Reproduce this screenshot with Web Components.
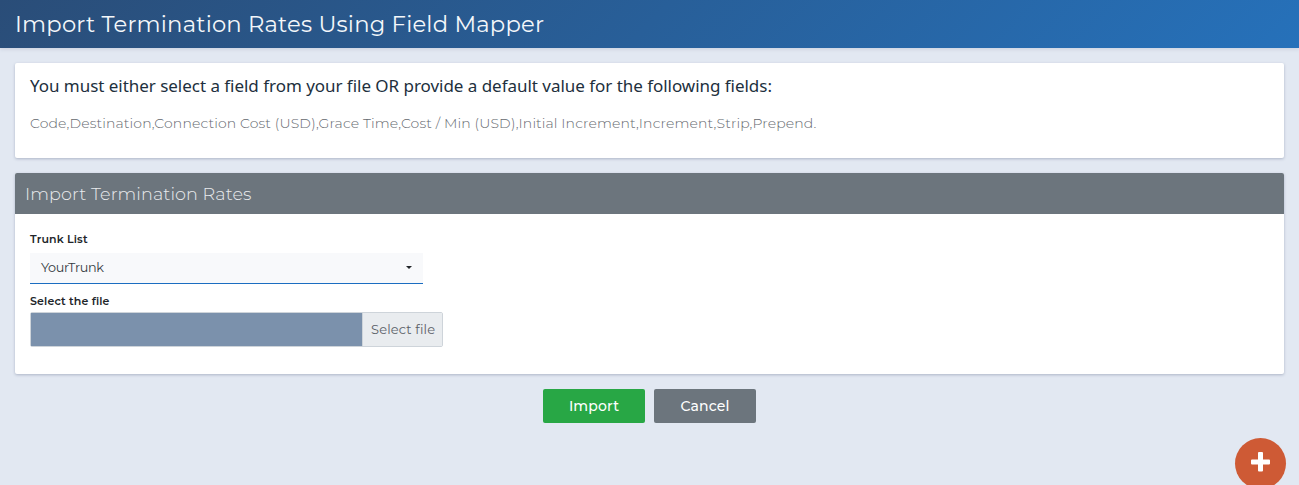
<!DOCTYPE html>
<html lang="en"><head><meta charset="utf-8"><title>Import Termination Rates</title>
<style>
html,body{margin:0;height:100%;overflow:hidden}
body{background:#e2e8f2;font-family:Montserrat,Inter,sans-serif;color:#212529}
</style></head><body>
<rate-page></rate-page>
<script>
const define=(name,html)=>customElements.define(name,class extends HTMLElement{
 constructor(){super();const t=document.createElement('template');t.innerHTML=html;this.attachShadow({mode:'open'}).append(t.content.cloneNode(true));}
});
define('page-title',`<style>:host{display:flex;align-items:center;box-sizing:border-box;height:48px;padding:0 15px;background:linear-gradient(135deg,#2a4d78,#2671ba);color:#f4f7fa;font-size:22.7px;letter-spacing:.2px;font-weight:400;box-shadow:0 1px 4px rgba(60,70,110,.15);white-space:nowrap}</style><span><slot></slot></span>`);
define('white-card',`<style>:host{display:block;box-sizing:border-box;background:#fff;border-radius:2px;overflow:hidden;box-shadow:0 1px 3px rgba(40,50,90,.28);white-space:nowrap}</style><slot></slot>`);
define('card-header',`<style>:host{display:flex;align-items:center;height:41px;box-sizing:border-box;padding:0 10px;background:#6c757d;color:#e9ebed;font-size:17.6px;letter-spacing:.09px;font-weight:300}</style><span><slot></slot></span>`);
define('field-label',`<style>:host{display:block;height:14px;line-height:14px;font-size:11px;letter-spacing:.15px;font-weight:600;color:#212529}</style><span><slot></slot></span>`);
define('trunk-select',`<style>:host{display:flex;align-items:center;justify-content:space-between;box-sizing:border-box;width:393px;height:31px;padding:0 11px;background:#f8f9fb;border-bottom:1px solid #1b6dc1;font-size:12.8px;letter-spacing:-.36px;color:#343b42}span{padding-bottom:2px}i{width:0;border:3px solid transparent;border-top-color:#212529;border-bottom:0;margin-top:-1px}</style><span><slot></slot></span><i></i>`);
define('file-picker',`<style>:host{display:grid;grid-template-columns:331px 1fr;box-sizing:border-box;width:413px;height:35px;border:1px solid #ced4da;border-radius:2px}div{background:#7b91ac}b{font-weight:400;font-size:13px;letter-spacing:.15px;color:#5b6168;background:#e9ecef;border-left:1px solid #ced4da;display:flex;align-items:center;padding:0 0 1px 8px}</style><div></div><b><span><slot></slot></span></b>`);
define('action-button',`<style>:host{display:flex;align-items:center;justify-content:center;width:102px;height:34px;border-radius:2px;background:var(--bg);color:#fff;font-size:14px;letter-spacing:.15px;font-weight:500}</style><span><slot></slot></span>`);
define('add-button',`<style>:host{position:absolute;left:1235px;top:438px;width:51px;height:51px;border-radius:50%;background:#ce5a35}svg{display:block}</style><svg width="51" height="51"><path fill="#fff" d="M24 14h3a1 1 0 0 1 1 1v6.5h6a1 1 0 0 1 1 1v3a1 1 0 0 1-1 1h-6v6a1 1 0 0 1-1 1h-3a1 1 0 0 1-1-1v-6h-6a1 1 0 0 1-1-1v-3a1 1 0 0 1 1-1h6v-6.5a1 1 0 0 1 1-1z"/></svg>`);
define('rate-page',`<style>:host{display:block}main{display:grid;gap:15px;padding:15px}.info{height:95px;padding:12px 15px}h5{margin:0;font:400 17px/21px "Noto Sans",sans-serif;letter-spacing:-.033px;color:#212f3d}p{margin:17px 0 0;font-size:14px;line-height:20px;letter-spacing:.133px;font-weight:300;color:#666a70}.form{height:201px}.fields{padding:18px 15px}trunk-select{margin:7px 0 10px}file-picker{margin-top:4px}nav{display:flex;justify-content:center;gap:9px}</style>
<page-title>Import Termination Rates Using Field Mapper</page-title><main>
<white-card class="info"><h5>You must either select a field from your file OR provide a default value for the following fields:</h5><p>Code,Destination,Connection Cost (USD),Grace Time,Cost / Min (USD),Initial Increment,Increment,Strip,Prepend.</p></white-card>
<white-card class="form"><card-header>Import Termination Rates</card-header><div class="fields"><field-label>Trunk List</field-label><trunk-select>YourTrunk</trunk-select><field-label>Select the file</field-label><file-picker>Select file</file-picker></div></white-card>
<nav><action-button style="--bg:#28a745">Import</action-button><action-button style="--bg:#6c757d">Cancel</action-button></nav></main><add-button></add-button>`);
</script></body></html>
